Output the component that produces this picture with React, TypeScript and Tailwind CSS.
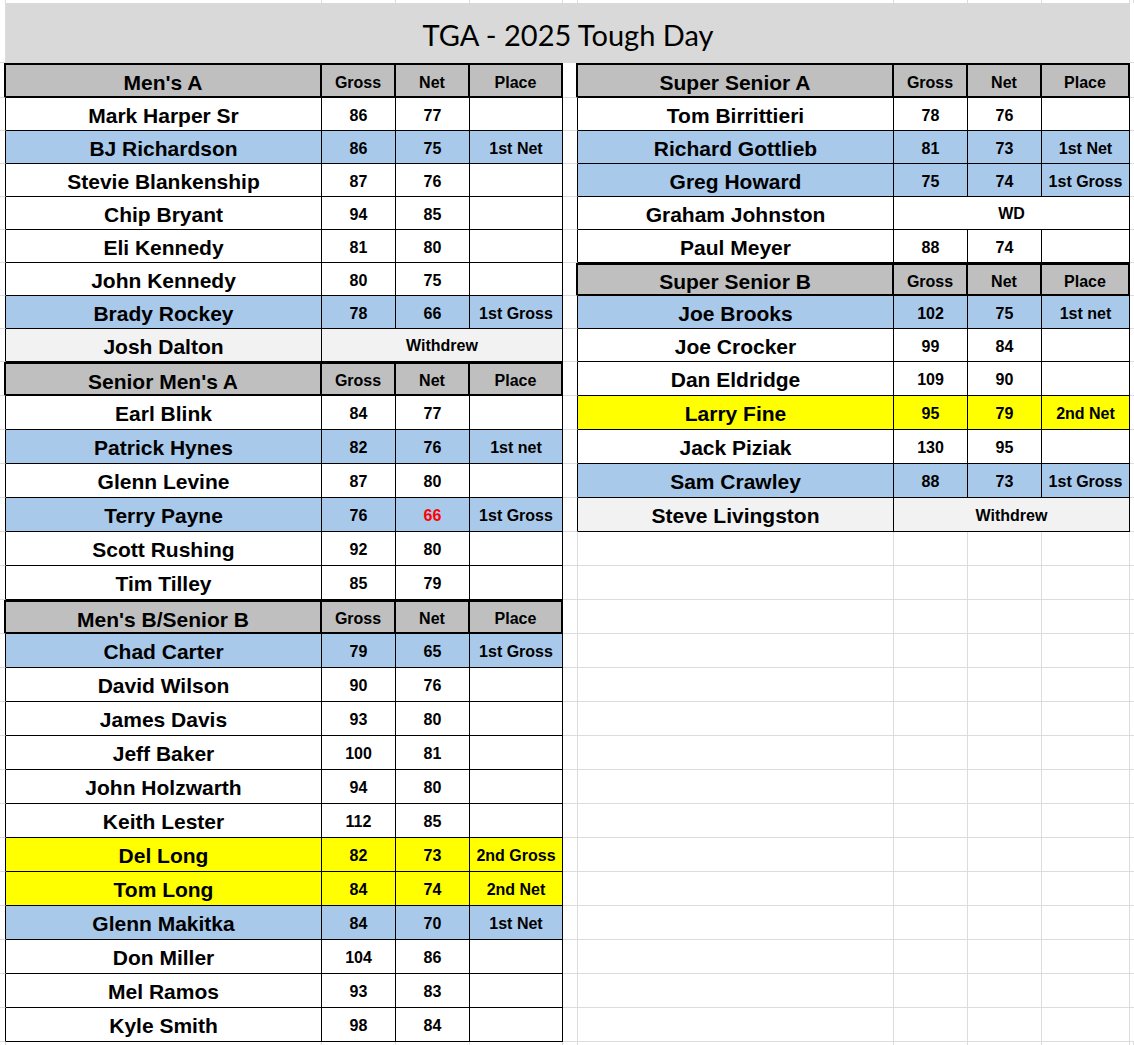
import React from 'react';

type Tone = 'white' | 'blue' | 'yellow' | 'grey';

type Side =
  | { kind: 'head'; title: string }
  | { kind: 'row'; name: string; gross: string; net: string; place: string; tone: Tone; redNet: boolean }
  | { kind: 'merge'; name: string; note: string; tone: Tone }
  | null;

interface SheetRow {
  h: 33 | 34 | 35;
  left: Side;
  right: Side;
}

// spreadsheet columns: gutter | name gross net place | gap | name gross net place | rest
const GRID = 'grid grid-rows-1 grid-cols-[6px_316px_74px_74px_93px_15px_316px_74px_74px_88px_1fr]';
const LINE = 'border-[#dcdcdc]';

const toneBg: Record<Tone, string> = {
  white: 'bg-white',
  blue: 'bg-[#a9c9eb]',
  yellow: 'bg-[#ffff00]',
  grey: 'bg-[#f2f2f2]',
};

const heightCls: Record<number, string> = {
  33: 'h-[33px]',
  34: 'h-[34px]',
  35: 'h-[35px]',
};

const head = (title: string): Side => ({ kind: 'head', title });
const r = (name: string, gross: string, net: string, place = '', tone: Tone = 'white', redNet = false): Side => ({
  kind: 'row',
  name,
  gross,
  net,
  place,
  tone,
  redNet,
});
const merge = (name: string, note: string, tone: Tone = 'white'): Side => ({ kind: 'merge', name, note, tone });

const rows: SheetRow[] = [
  { h: 35, left: head("Men's A"), right: head('Super Senior A') },
  { h: 33, left: r('Mark Harper Sr', '86', '77'), right: r('Tom Birrittieri', '78', '76') },
  { h: 33, left: r('BJ Richardson', '86', '75', '1st Net', 'blue'), right: r('Richard Gottlieb', '81', '73', '1st Net', 'blue') },
  { h: 33, left: r('Stevie Blankenship', '87', '76'), right: r('Greg Howard', '75', '74', '1st Gross', 'blue') },
  { h: 33, left: r('Chip Bryant', '94', '85'), right: merge('Graham Johnston', 'WD') },
  { h: 33, left: r('Eli Kennedy', '81', '80'), right: r('Paul Meyer', '88', '74') },
  { h: 33, left: r('John Kennedy', '80', '75'), right: head('Super Senior B') },
  { h: 33, left: r('Brady Rockey', '78', '66', '1st Gross', 'blue'), right: r('Joe Brooks', '102', '75', '1st net', 'blue') },
  { h: 33, left: merge('Josh Dalton', 'Withdrew', 'grey'), right: r('Joe Crocker', '99', '84') },
  { h: 34, left: head("Senior Men's A"), right: r('Dan Eldridge', '109', '90') },
  { h: 34, left: r('Earl Blink', '84', '77'), right: r('Larry Fine', '95', '79', '2nd Net', 'yellow') },
  { h: 34, left: r('Patrick Hynes', '82', '76', '1st net', 'blue'), right: r('Jack Piziak', '130', '95') },
  { h: 34, left: r('Glenn Levine', '87', '80'), right: r('Sam Crawley', '88', '73', '1st Gross', 'blue') },
  { h: 34, left: r('Terry Payne', '76', '66', '1st Gross', 'blue', true), right: merge('Steve Livingston', 'Withdrew', 'grey') },
  { h: 34, left: r('Scott Rushing', '92', '80'), right: null },
  { h: 34, left: r('Tim Tilley', '85', '79'), right: null },
  { h: 34, left: head("Men's B/Senior B"), right: null },
  { h: 34, left: r('Chad Carter', '79', '65', '1st Gross', 'blue'), right: null },
  { h: 34, left: r('David Wilson', '90', '76'), right: null },
  { h: 34, left: r('James Davis', '93', '80'), right: null },
  { h: 34, left: r('Jeff Baker', '100', '81'), right: null },
  { h: 34, left: r('John Holzwarth', '94', '80'), right: null },
  { h: 34, left: r('Keith Lester', '112', '85'), right: null },
  { h: 34, left: r('Del Long', '82', '73', '2nd Gross', 'yellow'), right: null },
  { h: 34, left: r('Tom Long', '84', '74', '2nd Net', 'yellow'), right: null },
  { h: 34, left: r('Glenn Makitka', '84', '70', '1st Net', 'blue'), right: null },
  { h: 34, left: r('Don Miller', '104', '86'), right: null },
  { h: 34, left: r('Mel Ramos', '93', '83'), right: null },
  { h: 34, left: r('Kyle Smith', '98', '84'), right: null },
];

// the cell left of a table carries the table's left border
function Edge({ side }: { side: Side }) {
  if (!side) return <div className={`border-r border-b ${LINE}`} />;
  if (side.kind === 'head') return <div className="border-b border-b-[#dcdcdc] border-r-2 border-r-black" />;
  return <div className="border-b border-b-[#dcdcdc] border-r border-r-black" />;
}

function SideCells({ side }: { side: Side }) {
  if (!side) {
    return (
      <>
        {[0, 1, 2, 3].map((i) => (
          <div key={i} className={`border-r border-b ${LINE}`} />
        ))}
      </>
    );
  }

  if (side.kind === 'head') {
    return (
      <>
        <div className="flex items-center justify-center pt-[4px] border-y-2 border-r-2 border-black bg-[#bfbfbf] text-[21px] font-bold leading-none whitespace-nowrap">
          {side.title}
        </div>
        {['Gross', 'Net', 'Place'].map((label) => (
          <div
            key={label}
            className="flex items-center justify-center pt-[4px] border-y-2 border-r-2 border-black bg-[#bfbfbf] text-[16px] font-bold leading-none"
          >
            {label}
          </div>
        ))}
      </>
    );
  }

  const bg = toneBg[side.tone];

  if (side.kind === 'merge') {
    return (
      <>
        <div className={`flex items-center justify-center pt-[2px] border-r border-b border-black ${bg} text-[21px] font-bold leading-none whitespace-nowrap`}>
          {side.name}
        </div>
        <div className={`col-span-3 flex items-center justify-center pt-[2px] border-r border-b border-black ${bg} text-[16px] font-bold leading-none`}>
          {side.note}
        </div>
      </>
    );
  }

  return (
    <>
      <div className={`flex items-center justify-center pt-[2px] border-r border-b border-black ${bg} text-[21px] font-bold leading-none whitespace-nowrap`}>
        {side.name}
      </div>
      <div className={`flex items-center justify-center pt-[3px] border-r border-b border-black ${bg} text-[16px] font-bold leading-none`}>
        {side.gross}
      </div>
      <div
        className={`flex items-center justify-center pt-[3px] border-r border-b border-black ${bg} text-[16px] font-bold leading-none ${
          side.redNet ? 'text-[#ff0000]' : ''
        }`}
      >
        {side.net}
      </div>
      <div className={`flex items-center justify-center pt-[3px] border-r border-b border-black ${bg} text-[16px] font-bold leading-none whitespace-nowrap`}>
        {side.place}
      </div>
    </>
  );
}

export default function App() {
  return (
    <div className="w-[1134px] h-[1045px] overflow-hidden bg-white text-black font-['Liberation_Sans',Arial,sans-serif]">
      {/* strip above the title */}
      <div className={`${GRID} h-[3px]`}>
        {Array.from({ length: 11 }).map((_, i) => (
          <div key={i} className={`border-r ${LINE}`} />
        ))}
      </div>

      {/* Title */}
      <div className={`${GRID} h-[60px]`}>
        <div className={`border-r border-b ${LINE}`} />
        <div className="col-span-9 flex items-center justify-center pt-[3px] bg-[#d9d9d9] font-['Lato',sans-serif] text-[29px] leading-none">
          TGA - 2025 Tough Day
        </div>
        <div className={`border-b ${LINE}`} />
      </div>

      {rows.map((row, i) => (
        <div key={i} className={`${GRID} ${heightCls[row.h]}`}>
          <Edge side={row.left} />
          <SideCells side={row.left} />
          <Edge side={row.right} />
          <SideCells side={row.right} />
          <div className={`border-b ${LINE}`} />
        </div>
      ))}

      {/* bit of sheet below */}
      <div className={`${GRID} h-[3px]`}>
        {Array.from({ length: 11 }).map((_, i) => (
          <div key={i} className={`border-r ${LINE}`} />
        ))}
      </div>
    </div>
  );
}
